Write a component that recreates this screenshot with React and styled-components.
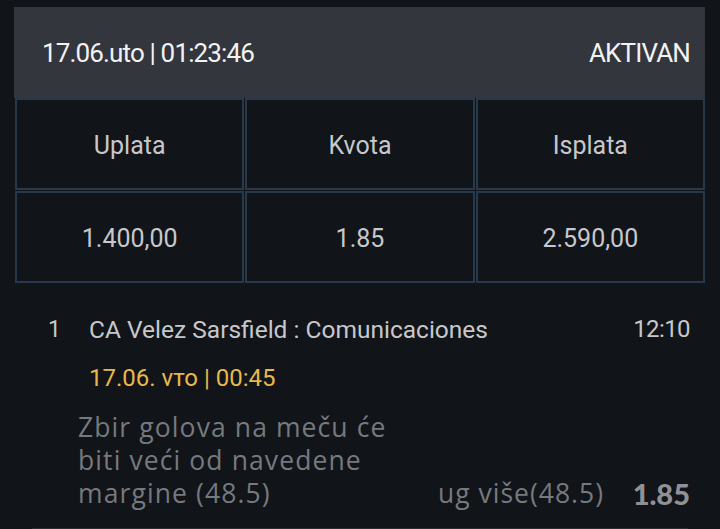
import React from "react";
import styled, { createGlobalStyle } from "styled-components";

const GlobalStyle = createGlobalStyle`
  html, body {
    margin: 0;
    padding: 0;
    background: #111418;
  }
  body {
    font-family: Roboto, "Liberation Sans", sans-serif;
    -webkit-font-smoothing: antialiased;
  }
`;

const Page = styled.div`
  width: 720px;
  height: 529px;
  overflow: hidden;
  padding: 7px 15px 0 14px;
  box-sizing: border-box;
  background: #111418;
`;

const Card = styled.div`
  display: flex;
  flex-direction: column;
`;

const Header = styled.div`
  height: 91px;
  display: flex;
  align-items: center;
  justify-content: space-between;
  padding: 0 15px 0 28px;
  background: #33363d;
  color: #f2f2f2;
  font-size: 26px;
  letter-spacing: -0.85px;
`;

const Grid = styled.div`
  display: grid;
  grid-template-columns: repeat(3, 1fr);
  grid-auto-rows: 92px;
  gap: 1px;
  padding: 0 0 0 1px;
`;

const Cell = styled.div`
  display: flex;
  align-items: center;
  justify-content: center;
  padding-top: 3px;
  border: 2px solid #27394a;
  background: #111418;
  color: #c6c8cc;
  font-size: 25px;
`;

const Match = styled.div`
  display: flex;
  flex-direction: column;
  padding: 30px 15px 0 20px;
`;

const Row = styled.div`
  display: flex;
  align-items: center;
  height: 32px;
`;

const Num = styled.span`
  width: 55px;
  padding-left: 14px;
  box-sizing: border-box;
  color: #c6c8cc;
  font-size: 23px;
`;

const Name = styled.span`
  flex: 1;
  color: #c6c8cc;
  font-size: 24.5px;
`;

const Time = styled.span`
  color: #c6c8cc;
  font-size: 24px;
  letter-spacing: -0.6px;
`;

const DateLine = styled.div`
  margin: 18px 0 0 55px;
  color: #e8b84b;
  font-size: 24px;
  line-height: 30px;
`;

const Bottom = styled.div`
  display: flex;
  align-items: flex-end;
  margin: 18px 0 0 44px;
`;

const Desc = styled.div`
  width: 340px;
  font-family: "Open Sans", Lato, sans-serif;
  color: #76797e;
  font-size: 26.5px;
  letter-spacing: 1.1px;
  line-height: 33px;
`;

const Pick = styled.div`
  flex: 1;
  text-align: right;
  font-family: "Open Sans", Lato, sans-serif;
  color: #76797e;
  font-size: 26.5px;
  letter-spacing: 1px;
  line-height: 33px;
`;

const Odd = styled.div`
  width: 86px;
  text-align: right;
  font-family: Lato, "Open Sans", sans-serif;
  font-weight: 900;
  color: #8f9195;
  font-size: 29px;
  line-height: 33px;
`;

const Rule = styled.div`
  height: 2px;
  margin: 18px 17px 0 18px;
  background: #2a2d32;
`;

export default function App() {
  return (
    <Page>
      <GlobalStyle />
      <Card>
        <Header>
          <span>17.06.uto | 01:23:46</span>
          <span>AKTIVAN</span>
        </Header>
        <Grid>
          <Cell>Uplata</Cell>
          <Cell>Kvota</Cell>
          <Cell>Isplata</Cell>
          <Cell>1.400,00</Cell>
          <Cell>1.85</Cell>
          <Cell>2.590,00</Cell>
        </Grid>
      </Card>
      <Match>
        <Row>
          <Num>1</Num>
          <Name>CA Velez Sarsfield : Comunicaciones</Name>
          <Time>12:10</Time>
        </Row>
        <DateLine>17.06. vто | 00:45</DateLine>
        <Bottom>
          <Desc>Zbir golova na meču će biti veći od navedene margine (48.5)</Desc>
          <Pick>ug više(48.5)</Pick>
          <Odd>1.85</Odd>
        </Bottom>
      </Match>
      <Rule />
    </Page>
  );
}
